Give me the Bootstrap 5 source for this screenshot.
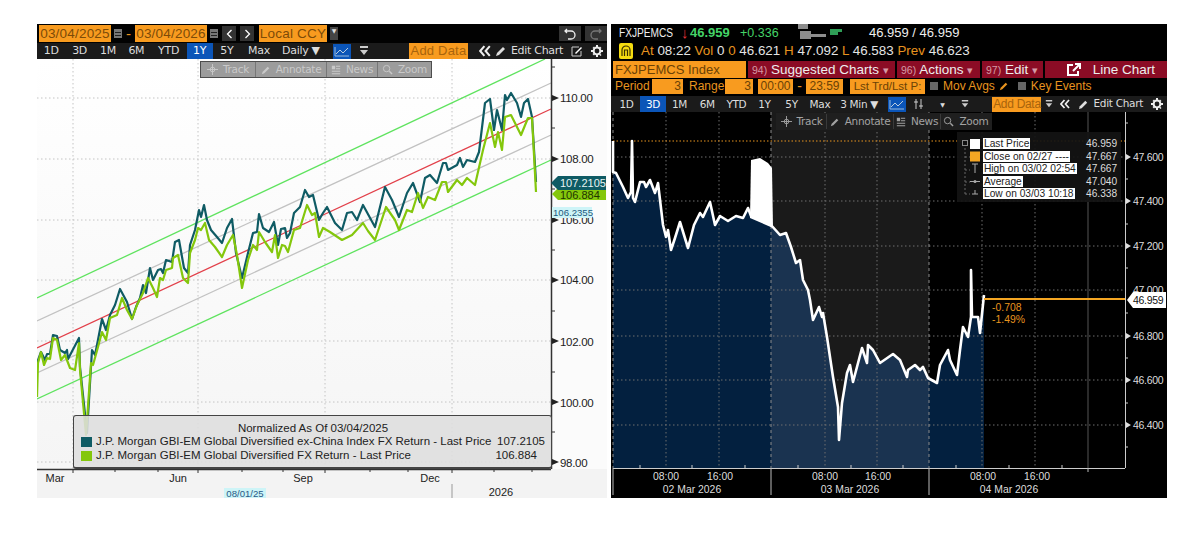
<!DOCTYPE html>
<html lang="en">
<head>
  <meta charset="UTF-8" />
  <title>Bloomberg charts</title>
  <link href="https://cdn.jsdelivr.net/npm/bootstrap@5.3.2/dist/css/bootstrap.min.css" rel="stylesheet">
  <style>
    body { background: #fff; font-family: "DejaVu Sans", sans-serif; font-size: 11px; overflow: hidden; }
    .page { padding: 24px 0 0 37px; gap: 4px; }
    .panel { height: 474px; }
    .panel-left { width: 570px; background: #f3f3f3; }
    .panel-right { width: 556px; background: #000; }

    .bar { color: #ddd; white-space: nowrap; letter-spacing: -.3px; }
    .bar-black { height: 19px; background: #020202; padding-left: 2px; }
    .bar-gray { height: 16px; background: #1b1b1b; }
    .bar-small { font-size: 10.5px; padding-left: 2px; }
    .cell { text-align: center; line-height: 16px; flex: none; }
    .w26 { width: 26px; } .w27 { width: 27px; } .w28 { width: 28.4px; } .w30 { width: 30px; }
    .w36 { width: 36px; } .w48 { width: 48px; } .w50 { width: 50px; }
    .active-cell { background: #0b55b8; color: #fff; }
    .orange-box { background: #f89b1f; color: #7c4b08; font-family: "Liberation Sans", sans-serif; font-size: 13.5px; line-height: 17px; letter-spacing: .2px; text-align: center; flex: none; }
    .box-date { width: 72px; }
    .box-ccy { width: 68px; margin-left: 5px; }
    .dash { width: 13px; text-align: center; font-size: 14px; line-height: 1; }
    .cal { margin-left: 3px; }
    .orange-text { color: #e8941f; }
    .add-data { background: #f89b1f; color: #a8640c; font-family: "Liberation Sans", sans-serif; text-align: center; flex: none; }
    .add-left { width: 59px; font-size: 13px; line-height: 16px; letter-spacing: .2px; }
    .add-right { width: 49px; font-size: 12px; line-height: 15px; }
    .step { background: #333; width: 14px; height: 15px; margin-left: 4px; }
    .icon-btn { background: #333; width: 22px; height: 15px; }
    .caret-btn { background: #444; color: #ddd; width: 8px; height: 13px; font-size: 6px; margin-left: 3px; }
    .icon-blue { background: #0b55b8; width: 18px; height: 15px; }
    .tiny { font-size: 6px; }
    .back-left { margin-left: 11px; }
    .back-right { margin-left: 7px; }

    .chart { height: 439px; }
    .chart svg { display: block; }
    .chart-right { height: 386px; }
    .axis-text { font-family: "Liberation Sans", sans-serif; font-size: 11.5px; fill: #222; letter-spacing: -.3px; }
    .axis-x { font-family: "Liberation Sans", sans-serif; font-size: 11px; fill: #222; }
    .axis-dark { font-family: "Liberation Sans", sans-serif; font-size: 10.5px; fill: #ddd; letter-spacing: -.3px; }
    .axis-time { font-family: "Liberation Sans", sans-serif; font-size: 10.4px; fill: #ddd; }
    .axis-flag { font-family: "Liberation Sans", sans-serif; font-size: 10.5px; fill: #111; letter-spacing: -.3px; }
    .axis-move { font-family: "Liberation Sans", sans-serif; font-size: 10.4px; fill: #e8941f; }
    .flag { font-family: "Liberation Sans", sans-serif; font-size: 11px; }
    .flag-small { font-family: "Liberation Sans", sans-serif; font-size: 9.6px; }
    .tools { position: absolute; height: 17px; border: 1px solid #4d4d4d; font-size: 10.5px; letter-spacing: -.3px; }
    .tools > div { height: 100%; gap: 5px; border-right: 1px solid #777; flex: none; }
    .tools > div:last-child { border-right: 0; }
    .tools-left { left: 163px; top: 2px; width: 232px; background: #9c9c9c; color: #c9c9c9; }
    .tools-right { left: 165px; top: 1px; width: 216px; background: #1f1f1f; color: #a3a3a3; border-color: #1f1f1f; }
    .tools-right > div { border-right-color: #3a3a3a; }
    .tl1 { width: 55px; } .tl2 { width: 71px; } .tl3 { width: 51px; } .tl4 { width: 53px; }
    .tr1 { width: 50px; } .tr2 { width: 67px; } .tr3 { width: 47px; } .tr4 { width: 50px; }

    .legend-left { position: absolute; left: 36px; top: 356px; width: 479px; height: 54px; background: rgba(222,222,222,.88);
      border: 1px solid #444; border-bottom-width: 2px; border-radius: 3px; padding: 6px 6px 0 7px; color: #222; white-space: nowrap;
      font-family: "Liberation Sans", sans-serif; font-size: 11.5px; line-height: 13.4px; }
    .swatch { width: 11px; height: 10px; flex: none; margin-right: 4px; }
    .swatch-teal { background: #0f5b64; }
    .swatch-green { background: #84c70c; }
    .legend-right { position: absolute; left: 346px; top: 20px; width: 164px; height: 70px; background: rgba(20,20,20,.92); padding: 6px 0 0 26px;
      font-family: "Liberation Sans", sans-serif; font-size: 10.2px; line-height: 12.5px; color: #ddd; white-space: nowrap; }
    .legend-right .name { background: #fff; color: #222; padding: 0 1px; }
    .legend-right .val { position: absolute; left: 129px; }
    .legend-right svg { position: absolute; left: 0; top: 0; }

    .ticker, .quote { font-family: "Liberation Sans", sans-serif; white-space: nowrap; }
    .ticker { height: 19px; font-size: 13px; color: #eee; position: relative; }
    .ticker span, .ticker b, .ticker svg { position: absolute; }
    .symbol { left: 8px; transform: scaleX(.78); transform-origin: left center; }
    .arrow { left: 70px; color: #e5333b; font-weight: 700; font-size: 15px; }
    .last { left: 79px; color: #45d468; font-weight: 700; }
    .chg { left: 129px; color: #45d468; font-size: 12.5px; }
    .spark { left: 187px; top: 0; }
    .bidask { left: 258px; }
    .quote { height: 18px; font-size: 13.4px; color: #e4e4e4; }
    .quote i { font-style: normal; color: #e8941f; }
    .row-suggest { height: 17px; margin-top: 1px; padding-left: 2px; white-space: nowrap; font-family: "Liberation Sans", sans-serif; }
    .row-suggest .name { width: 133px; background: #f89b1f; color: #6b4206; font-size: 13px; line-height: 17px; padding-left: 2px; flex: none; }
    .red-cell { background: #8b0c25; color: #eee; font-size: 13.5px; line-height: 17px; margin-left: 2px; flex: none; padding-left: 4px; }
    .red-cell small { font-size: 10.5px; color: #d59aa5; }
    .rc1 { width: 147px; } .rc2 { width: 83px; } .rc3 { width: 61px; }
    .line-cell { padding-right: 12px; }
    .row-period { height: 17px; padding-left: 2px; font-family: "Liberation Sans", sans-serif; font-size: 12px; line-height: 15px; margin-top: 1px; white-space: nowrap; }
    .period-box { background: #f89b1f; color: #6b4206; height: 15px; text-align: center; flex: none; }
    .label-period { width: 39px; flex: none; padding-left: 2px; }
    .label-range { width: 36px; margin-left: 6px; flex: none; }
    .box-3a { width: 31px; text-align: right; padding-right: 2px; }
    .box-3b { width: 28px; text-align: right; padding-right: 2px; }
    .box-from { width: 35px; margin-left: 5px; }
    .box-to { width: 37px; }
    .box-lst { width: 75px; margin-left: 7px; font-size: 11.5px; }
    .check { width: 8px; height: 8px; background: #666; flex: none; margin: 3px 5px 0 5px; }
    .check-key { margin-left: 9px; }
    .pen-mov { margin: 2px 0 0 4px; }
  </style>
</head>
<body>

<svg width="0" height="0" class="position-absolute">
  <symbol id="cal" viewBox="0 0 8 9"><path d="M0 0h8v9H0z" fill="#777"/><path d="M1 3h6v1H1zM1 6h6v1H1z" fill="#222"/></symbol>
  <symbol id="line" viewBox="0 0 18 15"><path d="M3 10l4-4 3 3 5-5" fill="none" stroke="#bcd" stroke-width="1"/><path d="M2 3v9h14" fill="none" stroke="#9bd" stroke-width="1"/></symbol>
  <symbol id="filter" viewBox="0 0 10 12"><path d="M1 1h8v2H1zM1 5h8L5 10z" fill="#ccc"/></symbol>
  <symbol id="pen" viewBox="0 0 12 12"><path d="M1 11l1-3 6-6 2 2-6 6z" fill="currentColor"/></symbol>
  <symbol id="edit" viewBox="0 0 12 12"><path d="M1 2h7M1 2v9h9V6" fill="none" stroke="#ccc"/><path d="M4 8l6-6 1 1-6 6z" fill="#fff"/></symbol>
  <symbol id="gear" viewBox="0 0 12 12"><circle cx="6" cy="6" r="3.400" fill="none" stroke="#eee" stroke-width="2"/><path d="M5 0h2v2H5zM5 10h2v2H5zM0 5h2v2H0zM10 5h2v2h-2zM1.500 3l1.500-1.500 1 1-1.500 1.500zM8 2.500l1-1 1.500 1.500-1 1zM1.500 9l1-1 1.500 1.500-1 1zM8 9.500l1-1 1.500 1.500-1 1z" fill="#eee"/></symbol>
  <symbol id="cross" viewBox="0 0 12 12"><path d="M6 0v12M0 6h12" stroke="currentColor"/><circle cx="6" cy="6" r="2.500" fill="none" stroke="currentColor"/></symbol>
  <symbol id="news" viewBox="0 0 12 12"><path d="M1 1h4v4H1zM6 1h5v1H6zM6 4h5v1H6zM1 7h10v1H1zM1 10h10v1H1z" fill="currentColor"/></symbol>
  <symbol id="zoom" viewBox="0 0 12 12"><circle cx="5" cy="5" r="3.500" fill="none" stroke="currentColor"/><path d="M8 8l3 3" stroke="currentColor" stroke-width="1.500"/></symbol>
  <symbol id="back" viewBox="0 0 10 10"><path d="M4.500 1L1 5l3.500 4M9 1L5.500 5 9 9" fill="none" stroke="#eee" stroke-width="1.700"/></symbol>
</svg>

<div class="page d-flex">

  <!-- left chart -->
  <div class="panel panel-left d-flex flex-column">
    <div class="bar bar-black d-flex align-items-center">
      <span class="orange-box box-date">03/04/2025</span>
      <svg class="cal" width="8" height="9"><use href="#cal"/></svg>
      <span class="orange-text dash">-</span>
      <span class="orange-box box-date">03/04/2026</span>
      <svg class="cal" width="8" height="9"><use href="#cal"/></svg>
      <div class="step d-flex align-items-center justify-content-center"><svg width="7" height="10"><path d="M5.500 1L1.500 5l4 4" fill="none" stroke="#fff" stroke-width="1.300"/></svg></div>
      <div class="step d-flex align-items-center justify-content-center"><svg width="7" height="10"><path d="M1.500 1l4 4-4 4" fill="none" stroke="#fff" stroke-width="1.300"/></svg></div>
      <span class="orange-box box-ccy">Local CCY</span>
      <span class="caret-btn text-center lh-sm">▼</span>
      <div class="d-flex gap-1 ms-auto">
        <div class="icon-btn d-flex align-items-center justify-content-center"><svg width="12" height="12"><path d="M3 1L1 3l2 2M1 3h6a3.500 3.500 0 0 1 0 8H4" fill="none" stroke="#eee" stroke-width="1.300"/></svg></div>
        <div class="icon-btn d-flex align-items-center justify-content-center"><svg width="12" height="12"><path d="M9 1l2 2-2 2M11 3H5a3.500 3.500 0 0 0 0 8h3" fill="none" stroke="#777" stroke-width="1.300"/></svg></div>
      </div>
    </div>
    <div class="bar bar-gray d-flex align-items-center">
      <span class="cell w28">1D</span><span class="cell w28">3D</span><span class="cell w28">1M</span><span class="cell w28">6M</span>
      <span class="cell w36">YTD</span><span class="cell w26 active-cell">1Y</span><span class="cell w28">5Y</span><span class="cell w36">Max</span>
      <span class="cell w48">Daily ▼</span>
      <div class="icon-blue ms-2"><svg width="18" height="15"><use href="#line"/></svg></div>
      <svg class="ms-2" width="10" height="12"><use href="#filter"/></svg>
      <div class="d-flex align-items-center ms-auto">
        <span class="add-data add-left">Add Data</span>
        <svg class="back-left" width="12" height="12"><use href="#back"/></svg>
        <svg class="ms-1" width="12" height="12"><use href="#pen"/></svg>
        <span class="ms-1">Edit Chart</span>
        <svg class="ms-2" width="12" height="12"><use href="#edit"/></svg>
        <svg class="ms-2 me-1" width="12" height="12"><use href="#gear"/></svg>
      </div>
    </div>
    <div class="chart position-relative">
      <svg width="570" height="439" viewBox="37 59 570 439">
        <defs><linearGradient id="paper" x1="0" y1="0" x2="0" y2="1"><stop offset="0" stop-color="#fff"/><stop offset="1" stop-color="#f5f5f5"/></linearGradient></defs>
        <rect x="37" y="59" width="514" height="410" fill="url(#paper)"/>
        <rect x="552" y="59" width="55" height="410" fill="#fbfbfb"/>
        <g stroke="#c4c4c4" stroke-dasharray="1.500 2.500" fill="none">
          <path d="M37 98H551M37 159H551M37 220H551M37 280H551M37 341H551M37 402H551M37 462H551"/>
          <path d="M73 59V469M198 59V469M325 59V469M452 59V469"/>
        </g>
        <g fill="none" stroke-width="1.300">
          <path d="M37 298L545 59" stroke="#5fe35f"/>
          <path d="M37 321L551 83" stroke="#c2c2c2"/>
          <path d="M37 348L551 109" stroke="#e2404a"/>
          <path d="M37 373L551 135" stroke="#c2c2c2"/>
          <path d="M37 399L551 160" stroke="#5fe35f"/>
        </g>
        <polyline fill="none" stroke="#0f5b64" stroke-width="2.200" stroke-linejoin="round" points="37,363 41,352 45,360 47,354 50,354 53,335 57,336 60,350 65,353 67,350 68,359 79,338 80,367 87,433 92,350 95,355 97,345 102,319 106,330 110,315 115,305 120,289 127,302 132,319 136,307 140,298 143,285 146,293 150,268 153,280 158,270 161,269 163,273 166,260 172,262 175,242 179,240 184,268 188,273 190,245 195,230 199,210 201,217 204,205 207,220 211,230 217,237 222,243 227,228 232,219 236,253 242,278 248,253 253,233 257,232 259,214 263,228 269,232 274,222 278,245 281,229 285,228 287,238 290,233 294,213 300,207 305,190 309,197 313,195 319,220 323,213 327,207 335,223 342,230 347,213 352,212 357,220 363,205 375,227 385,187 392,200 399,217 407,193 413,183 420,202 425,178 430,175 437,183 443,163 446,163 448,170 457,165 460,158 463,167 467,160 475,162 479,152 485,103 490,99 494,130 497,110 502,130 505,95 507,100 511,93 517,103 521,117 524,103 528,99 532,117 536,182"/>
        <polyline fill="none" stroke="#84c70c" stroke-width="2.200" stroke-linejoin="round" points="37,397 38,363 41,352 44,365 47,358 50,359 53,338 57,340 61,360 65,355 70,368 75,370 79,343 80,370 86,435 91,363 93,365 98,347 102,332 106,340 110,318 117,315 122,298 127,310 132,319 137,305 143,293 148,278 153,288 157,297 160,278 163,280 166,270 172,268 173,258 178,255 183,278 188,283 190,253 195,240 198,228 201,230 205,223 209,240 215,247 222,257 227,245 233,235 237,255 242,288 248,260 253,245 257,250 259,232 265,242 272,252 275,235 278,258 282,245 285,246 288,252 294,230 300,228 307,205 312,215 315,213 319,237 323,228 330,232 342,240 352,235 363,223 368,231 375,240 386,207 395,220 399,230 407,210 412,212 418,193 423,208 428,197 435,200 442,182 446,182 448,192 457,180 462,185 467,178 475,185 483,150 490,123 495,147 498,132 502,150 505,117 511,115 517,127 521,135 528,118 532,118 536,192"/>
        <path d="M551.500 59V469M37 469.500H551" stroke="#333" stroke-width="1.500" fill="none"/>
        <path d="M73 469v4M115 469v3M158 469v3M198 469v4M242 469v3M283 469v3M325 469v4M370 469v3M408 469v3M452 469v4M494 469v3M532 469v3M552 67h3M552 128h3M552 189h3M552 250h3M552 311h3M552 372h3M552 432h3" stroke="#333" fill="none"/>
        <path d="M552 95l7 3-7 3zM552 156l7 3-7 3zM552 217l7 3-7 3zM552 277l7 3-7 3zM552 338l7 3-7 3zM552 399l7 3-7 3zM552 459l7 3-7 3z" fill="#222"/>
        <g class="axis-text">
          <text x="560" y="102">110.00</text><text x="560" y="163">108.00</text><text x="560" y="224">106.00</text>
          <text x="560" y="284">104.00</text><text x="560" y="346">102.00</text><text x="560" y="407">100.00</text><text x="560" y="467">98.00</text>
        </g>
        <g class="axis-x" text-anchor="middle">
          <text x="55" y="482">Mar</text><text x="178" y="482">Jun</text>
          <text x="303" y="482">Sep</text><text x="430" y="482">Dec</text>
          <text x="501" y="496">2026</text>
        </g>
        <path d="M452 484V498" stroke="#999"/>
        <rect x="224" y="488" width="42" height="10" fill="#cdf4f7"/>
        <text class="flag-small" x="245" y="497" text-anchor="middle" fill="#2a5a86">08/01/25</text>
        <rect x="552" y="207" width="40" height="11" fill="#cdf4f7"/>
        <text class="flag-small" x="553" y="216" fill="#1d5a80">106.2355</text>
        <path d="M558 188H606V200H558L552 194z" fill="#84c70c"/>
        <text class="flag" x="560" y="199" fill="#1f3300">106.884</text>
        <path d="M558 176H606V190H558L551 183z" fill="#0f5b64"/>
        <text class="flag" x="560" y="187" fill="#e8f4f4">107.2105</text>
      </svg>
      <div class="tools tools-left d-flex">
        <div class="d-flex align-items-center justify-content-center tl1"><svg width="11" height="11"><use href="#cross"/></svg>Track</div>
        <div class="d-flex align-items-center justify-content-center tl2"><svg width="10" height="10"><use href="#pen"/></svg>Annotate</div>
        <div class="d-flex align-items-center justify-content-center tl3"><svg width="10" height="10"><use href="#news"/></svg>News</div>
        <div class="d-flex align-items-center justify-content-center tl4"><svg width="11" height="11"><use href="#zoom"/></svg>Zoom</div>
      </div>
      <div class="legend-left">
        <div class="text-center">Normalized As Of 03/04/2025</div>
        <div class="d-flex align-items-center"><span class="swatch swatch-teal"></span><span>J.P. Morgan GBI-EM Global Diversified ex-China Index FX Return - Last Price</span><span class="ms-auto">107.2105</span></div>
        <div class="d-flex align-items-center"><span class="swatch swatch-green"></span><span>J.P. Morgan GBI-EM Global Diversified FX Return - Last Price</span><span class="ms-auto pe-2">106.884</span></div>
      </div>
    </div>
  </div>

  <!-- right chart -->
  <div class="panel panel-right d-flex flex-column">
    <div class="ticker d-flex align-items-center">
      <span class="symbol">FXJPEMCS</span>
      <span class="arrow">↓</span><b class="last">46.959</b>
      <span class="chg">+0.336</span>
      <svg class="spark" width="50" height="18"><path d="M0 0h10v5H0zM2 7h11v8H2zM13 10h15v3H13z" fill="#8d8d8d"/><path d="M32 5h12v3h-4v3h-8z" fill="#2f9e57"/></svg>
      <span class="bidask">46.959 / 46.959</span>
    </div>
    <div class="quote d-flex align-items-center gap-1">
      <svg class="ms-2" width="14" height="16"><rect width="14" height="16" rx="2" fill="#f5dc10"/><path d="M3 13V7a4 4 0 0 1 8 0v6M5.500 13V7h3v6" fill="none" stroke="#3a3000" stroke-width="1.200"/></svg>
      <span class="ms-1"><i>At</i> 08:22 <i>Vol</i> 0 <i>0</i> 46.621 <i>H</i> 47.092 <i>L</i> 46.583 <i>Prev</i> 46.623</span>
    </div>
    <div class="row-suggest d-flex">
      <span class="name">FXJPEMCS Index</span>
      <span class="red-cell rc1"><small>94)</small> Suggested Charts <small>▾</small></span>
      <span class="red-cell rc2"><small>96)</small> Actions <small>▾</small></span>
      <span class="red-cell rc3"><small>97)</small> Edit <small>▾</small></span>
      <span class="red-cell line-cell flex-grow-1 d-flex align-items-center justify-content-end gap-2"><svg width="14" height="13"><path d="M6 2H1v10h10V8" fill="none" stroke="#fff" stroke-width="2"/><path d="M6 8l6-6M8 1h5v5" fill="none" stroke="#fff" stroke-width="2"/></svg><span class="ms-1">Line Chart</span></span>
    </div>
    <div class="row-period d-flex orange-text align-items-start">
      <span class="label-period">Period</span><span class="period-box box-3a">3</span>
      <span class="label-range">Range</span><span class="period-box box-3b">3</span>
      <span class="period-box box-from">00:00</span><span class="dash">-</span>
      <span class="period-box box-to">23:59</span>
      <span class="period-box box-lst">Lst Trd/Lst P:</span>
      <span class="check"></span><span>Mov Avgs</span>
      <svg class="pen-mov" width="10" height="10"><use href="#pen"/></svg>
      <span class="check check-key"></span><span>Key Events</span>
    </div>
    <div class="bar bar-gray bar-small d-flex align-items-center">
      <span class="cell w27">1D</span><span class="cell w26 active-cell">3D</span><span class="cell w27">1M</span><span class="cell w28">6M</span>
      <span class="cell w30">YTD</span><span class="cell w26">1Y</span><span class="cell w28">5Y</span><span class="cell w28">Max</span>
      <span class="cell w50">3 Min ▼</span>
      <div class="icon-blue ms-1"><svg width="18" height="15"><use href="#line"/></svg></div>
      <svg class="ms-2" width="10" height="12"><path d="M2 1v10M7 1v10M0 4h4M5 8h4" stroke="#ccc" fill="none"/></svg>
      <span class="ms-3 tiny">▼</span>
      <svg class="ms-3" width="8" height="10"><use href="#filter"/></svg>
      <div class="d-flex align-items-center ms-auto">
        <span class="add-data add-right">Add Data</span>
        <svg class="ms-1" width="8" height="10"><use href="#filter"/></svg>
        <svg class="back-right" width="10" height="10"><use href="#back"/></svg>
        <svg class="ms-2" width="11" height="11"><use href="#pen"/></svg>
        <span class="ms-1">Edit Chart</span>
        <svg class="ms-2 me-1" width="12" height="12"><use href="#gear"/></svg>
      </div>
    </div>
    <div class="chart-right position-relative">
      <svg width="556" height="386" viewBox="611 112 556 386">
        <defs>
          <clipPath id="under"><polygon points="613,468 613,172 616,173 623,187 628,198 631,192 633,198 635,202 640,182 644,182 646,187 650,180 655,193 658,183 663,225 666,237 668,230 671,250 675,238 680,222 688,248 694,225 700,213 703,217 710,202 715,225 720,216 728,221 736,216 743,218 748,208 751,216 756,215 768,220 771,225 780,235 786,233 791,247 796,263 800,260 803,280 808,290 810,300 813,320 819,307 822,317 823,313 827,337 833,377 838,407 839,440 842,403 847,373 850,365 853,382 862,348 867,363 868,345 873,350 880,363 893,354 900,360 907,377 908,370 915,365 920,370 923,367 928,378 937,383 940,365 948,350 950,360 957,375 960,350 963,327 968,337 971,317 978,317 980,333 984,295 984,468"/></clipPath>
        </defs>
        <rect x="771" y="112" width="158" height="356" fill="#1a1a1a"/>
        <g clip-path="url(#under)">
          <rect x="613" y="130" width="158" height="338" fill="#03203f"/>
          <rect x="771" y="130" width="158" height="338" fill="#1a3350"/>
          <rect x="929" y="130" width="55" height="338" fill="#03203f"/>
        </g>
        <g stroke="#6e6e6e" stroke-dasharray="1.500 2.500" fill="none">
          <path d="M613 157H1125M613 201H1125M613 246H1125M613 290H1125M613 336H1125M613 380H1125M613 425H1125"/>
          <path d="M666 112V468M719 112V468M825 112V468M877 112V468M982 112V468M1035 112V468"/>
        </g>
        <path d="M613 112V468M771 112V468M929 112V468" stroke="#8a8a8a" stroke-dasharray="3 3" fill="none"/>
        <path d="M1088 112V468" stroke="#555" fill="none"/>
        <path d="M613 141H1125" stroke="#e8941f" stroke-dasharray="1.500 2" fill="none"/>
        <polygon fill="#fff" points="750,218 751,160 760,158 768,163 772,168 773,228"/>
        <polyline fill="none" stroke="#fff" stroke-width="2.600" stroke-linejoin="round" points="613,141 613,172 616,173 623,187 628,198 631,192 632,141 633,198 635,202 640,182 644,182 646,187 650,180 655,193 658,183 663,225 666,237 668,230 671,250 675,238 680,222 688,248 694,225 700,213 703,217 710,202 715,225 720,216 728,221 736,216 743,218 748,208 751,216 756,215 768,220 771,225 780,235 786,233 791,247 796,263 800,260 803,280 808,290 810,300 813,320 819,307 822,317 823,313 827,337 833,377 838,407 839,440 842,403 847,373 850,365 853,382 862,348 867,363 868,345 873,350 880,363 893,354 900,360 907,377 908,370 915,365 920,370 923,367 928,378 937,383 940,365 948,350 950,360 957,375 960,350 963,327 968,337 971,317 971,270 972,317 978,317 980,333 984,295"/>
        <path d="M984 299H1125" stroke="#f5a623" stroke-width="2" fill="none"/>
        <path d="M1125.500 112V468M613 468.500H1125" stroke="#ccc" fill="none"/>
        <path d="M1125 123h3M1125 179h3M1125 224h3M1125 268h3M1125 313h3M1125 358h3M1125 403h3M1125 447h3M640 468v-3M692 468v-3M745 468v-3M798 468v-3M851 468v-3M903 468v-3M956 468v-3M1009 468v-3M1062 468v-3" stroke="#ccc" fill="none"/>
        <path d="M1126 154l5 3-5 3zM1126 198l5 3-5 3zM1126 243l5 3-5 3zM1126 333l5 3-5 3zM1126 377l5 3-5 3zM1126 422l5 3-5 3z" fill="#ddd"/>
        <path d="M613 468V495M771 468V495M929 468V495" stroke="#bbb" fill="none"/>
        <path d="M1088 468V472" stroke="#bbb" fill="none"/>
        <g class="axis-dark">
          <text x="1133" y="161">47.600</text><text x="1133" y="205">47.400</text><text x="1133" y="250">47.200</text>
          <text x="1133" y="294">47.000</text><text x="1133" y="340">46.800</text><text x="1133" y="384">46.600</text><text x="1133" y="429">46.400</text>
        </g>
        <g class="axis-time" text-anchor="middle">
          <text x="666" y="480">08:00</text><text x="720" y="480">16:00</text><text x="692" y="493">02 Mar 2026</text>
          <text x="825" y="480">08:00</text><text x="878" y="480">16:00</text><text x="850" y="493">03 Mar 2026</text>
          <text x="983" y="480">08:00</text><text x="1037" y="480">16:00</text><text x="1009" y="493">04 Mar 2026</text>
        </g>
        <path d="M1133 292H1166V308H1133L1127 300z" fill="#fff"/>
        <text class="axis-flag" x="1133" y="304">46.959</text>
        <text class="axis-move" x="992" y="311">-0.708</text>
        <text class="axis-move" x="992" y="323">-1.49%</text>
      </svg>
      <div class="tools tools-right d-flex">
        <div class="d-flex align-items-center justify-content-center tr1"><svg width="11" height="11"><use href="#cross"/></svg>Track</div>
        <div class="d-flex align-items-center justify-content-center tr2"><svg width="10" height="10"><use href="#pen"/></svg>Annotate</div>
        <div class="d-flex align-items-center justify-content-center tr3"><svg width="10" height="10"><use href="#news"/></svg>News</div>
        <div class="d-flex align-items-center justify-content-center tr4"><svg width="11" height="11"><use href="#zoom"/></svg>Zoom</div>
      </div>
      <div class="legend-right">
        <svg width="26" height="70">
          <path d="M8 12v50M8 25h5M8 38h5M8 50h5M8 62h5" stroke="#666" stroke-dasharray="2 2" fill="none"/>
          <rect x="5.500" y="8.500" width="5" height="5" fill="#111" stroke="#888"/>
          <rect x="13" y="7" width="10" height="10" fill="#fff"/>
          <rect x="13" y="19.500" width="10" height="10" fill="#f5a623"/>
          <path d="M15 32h6M18 32v9M13 49.500h10M15 62h6M18 58v4" stroke="#aaa" fill="none"/>
          <circle cx="18" cy="49.500" r="1.500" fill="#aaa"/>
        </svg>
        <div><span class="name">Last Price</span><span class="val">46.959</span></div>
        <div><span class="name">Close on 02/27 ----</span><span class="val">47.667</span></div>
        <div><span class="name">High on 03/02 02:54</span><span class="val">47.667</span></div>
        <div><span class="name">Average</span><span class="val">47.040</span></div>
        <div><span class="name">Low on 03/03 10:18</span><span class="val">46.338</span></div>
      </div>
    </div>
  </div>
</div>

<script src="https://cdn.jsdelivr.net/npm/bootstrap@5.3.2/dist/js/bootstrap.bundle.min.js"></script>
</body>
</html>
